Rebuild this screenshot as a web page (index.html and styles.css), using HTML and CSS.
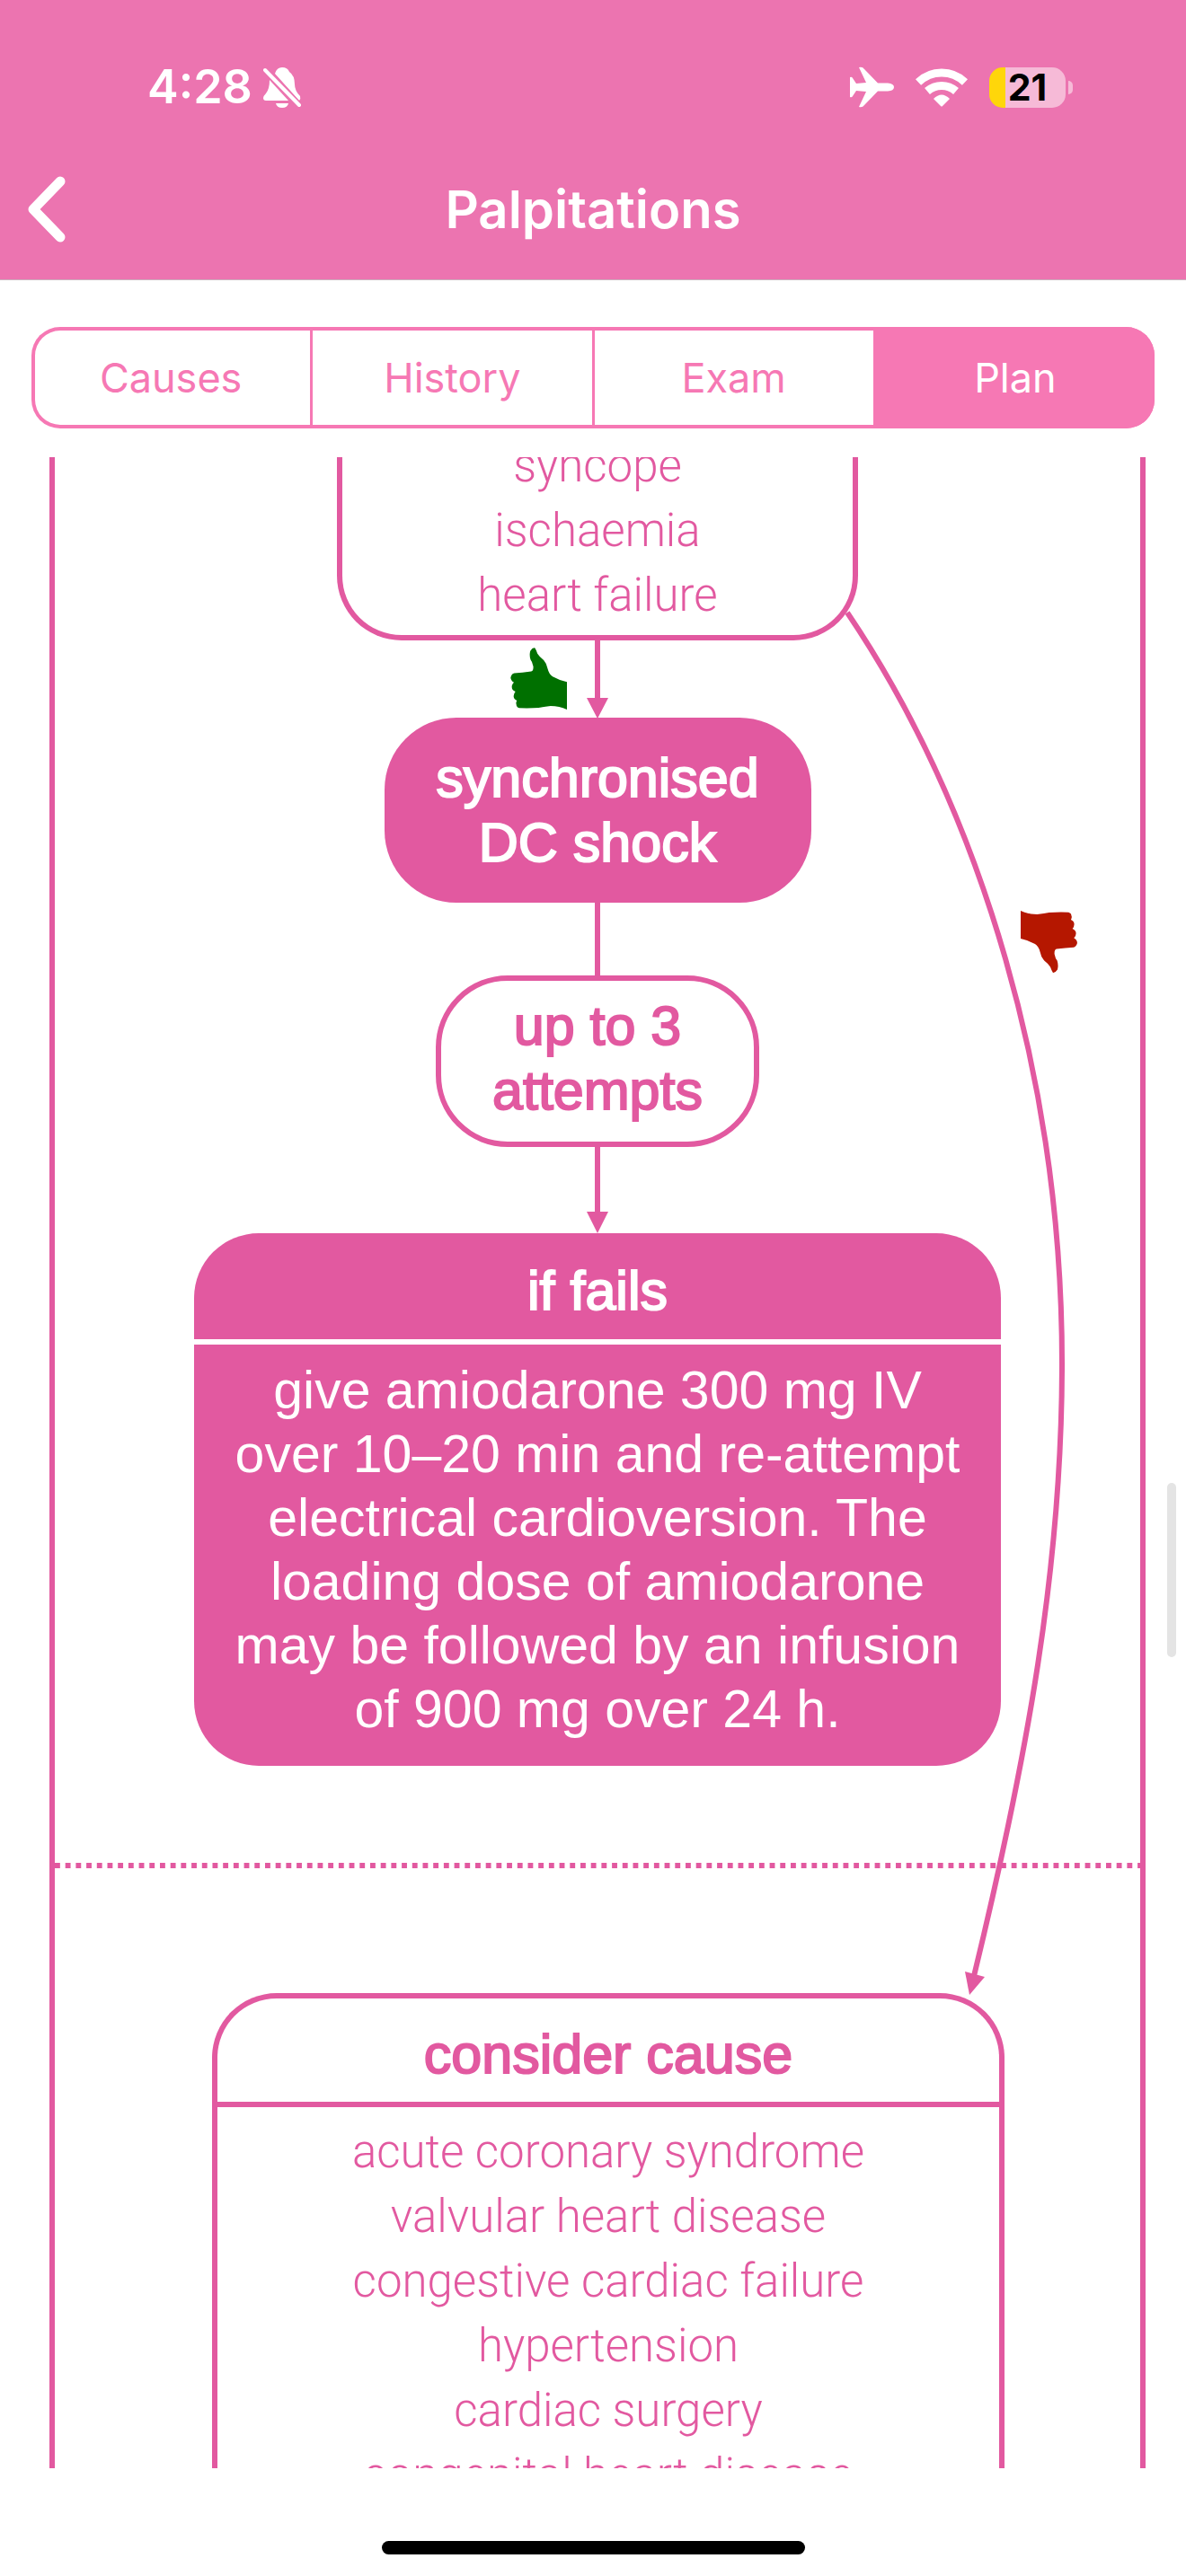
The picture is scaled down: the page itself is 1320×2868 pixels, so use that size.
FILE: index.html
```html
<!DOCTYPE html>
<html lang="en">
<head>
<meta charset="utf-8">
<meta name="viewport" content="width=device-width, initial-scale=1">
<title>Palpitations</title>
<link rel="stylesheet" href="styles.css">
</head>
<body>
<header class="app-header">
  <div class="status-bar">
    <div class="status-side">
      <span class="clock">4:28</span>
      <svg class="bell" viewBox="0 0 42 46" aria-label="Silent mode">
        <path fill="#fff" d="M13 8 Q15 1 21 1 Q27 1 29 6 Q35 10 35 20 Q35 27 41 33 Q42 36 40 38 Z"/>
        <path fill="#fff" d="M7 15 Q7 25 3 30 Q0 33 0 35 Q0 38 3 38 L28 38 Z"/>
        <path fill="#fff" d="M14 41 H28 Q27 46 21 46 Q15 46 14 41 Z"/>
        <path stroke="#ec74b0" stroke-width="8" d="M2 3 L42 46"/>
        <path stroke="#fff" stroke-width="4" stroke-linecap="round" d="M2 4 L40 43"/>
      </svg>
    </div>
    <div class="status-side status-icons">
      <svg class="plane" viewBox="0 0 49 46" aria-label="Airplane mode">
        <path fill="#fff" d="M10 1 Q14 0 16 3 L31 18.500 H42 Q49 19 49 23 Q49 27 42 27.500 H31 L16 43 Q14 46 10 45 L18 28 L7 27 L3 33 Q2 35 0 34 V12 Q2 11 3 13 L7 19 L18 18 Z"/>
      </svg>
      <svg class="wifi" viewBox="0 0 58 43" aria-label="Wi-Fi">
        <path fill="none" stroke="#fff" stroke-width="9" d="M3 15.500 Q14 5 29 5 Q44 5 55 15.500"/>
        <path fill="none" stroke="#fff" stroke-width="9" d="M13 25.500 Q20 19.500 29 19.500 Q38 19.500 45 25.500"/>
        <path fill="#fff" d="M20 34 Q29 25 38 34 L30 42 Q29 43 28 42 Z"/>
      </svg>
      <div class="battery"><span class="battery-level">21</span></div>
    </div>
  </div>
  <div class="title-bar">
    <button class="back" type="button" aria-label="Back">
      <svg viewBox="0 0 44 76"><path d="M37 7 L7 38 L37 69"/></svg>
    </button>
    <h1 class="title">Palpitations</h1>
  </div>
</header>

<nav class="tabs">
  <button class="tab" type="button">Causes</button>
  <button class="tab" type="button">History</button>
  <button class="tab" type="button">Exam</button>
  <button class="tab tab-active" type="button">Plan</button>
</nav>

<main class="viewport">
  <div class="lane">
    <section class="card outline signs">
      <ul class="list">
        <li>syncope</li>
        <li>ischaemia</li>
        <li>heart failure</li>
      </ul>
    </section>

    <div class="connector">
      <svg class="thumb" viewBox="0 0 190 208" aria-label="Yes">
        <defs>
          <path id="thumb" d="M0 0 Q25 12 55 12 Q80 9 95 6 Q120 4 160 5 Q170 8 170 18 Q172 22 168 30 Q179 35 179 45 Q179 53 173 60 Q185 65 185 76 Q185 85 178 91 Q189 98 189 108 Q185 121 177 122 Q150 123 120 128 Q112 130 113 145 Q116 160 122 167 Q127 182 123 197 Q116 208 108 207 Q103 200 99 188 Q92 177 78 166 Q68 155 65 138 Q60 118 48 111 Q25 98 0 93 Z"/>
        </defs>
        <use href="#thumb" fill="#007000" transform="rotate(180 95 104)"/>
      </svg>
      <svg class="arrow" viewBox="0 0 24 86"><path d="M9 0 H15 V64 H24 L12 87 L0 64 H9 Z"/></svg>
    </div>

    <section class="card solid shock">synchronised<br>DC shock</section>
    <div class="stem"></div>
    <section class="card outline attempts">up to 3<br>attempts</section>

    <div class="connector">
      <svg class="arrow arrow-long" viewBox="0 0 24 96"><path d="M9 0 H15 V72 H24 L12 96 L0 72 H9 Z"/></svg>
    </div>

    <section class="card solid fails">
      <h2 class="card-title">if fails</h2>
      <p class="card-text">give amiodarone 300 mg IV over 10–20 min and re-attempt electrical cardioversion. The loading dose of amiodarone may be followed by an infusion of 900 mg over 24 h.</p>
    </section>

    <svg class="divider" aria-hidden="true"><line x1="0" y1="3" x2="100%" y2="3"/></svg>

    <section class="card outline cause">
      <h2 class="card-title">consider cause</h2>
      <ul class="list">
        <li>acute coronary syndrome</li>
        <li>valvular heart disease</li>
        <li>congestive cardiac failure</li>
        <li>hypertension</li>
        <li>cardiac surgery</li>
        <li>congenital heart disease</li>
      </ul>
    </section>

    <svg class="branch" viewBox="61 509 1208 1720" aria-label="No">
      <path class="branch-line" d="M943 682 C1094 906 1182 1208 1182 1518 C1182 1745 1143 1957 1084 2200"/>
      <path class="branch-head" d="M1074 2195 L1096 2201 L1079 2221 Z"/>
      <use href="#thumb" fill="#b51700" transform="translate(1136 1014) scale(0.333)"/>
    </svg>
  </div>
  <div class="scroll-thumb"></div>
</main>

<footer class="home"><div class="home-bar"></div></footer>
</body>
</html>
```

FILE: styles.css
```css
:root {
  --header: #ec74b0;
  --tab: #f678b4;
  --pink: #e259a0;
  --ui: Inter, "Liberation Sans", sans-serif;
  --chart: "Liberation Sans", Arial, sans-serif;
}

* { box-sizing: border-box; margin: 0; padding: 0; }

body {
  display: flex;
  flex-direction: column;
  height: 100vh;
  background: #fff;
  font-family: var(--ui);
}

button { font: inherit; background: none; border: 0; cursor: pointer; }
svg { display: block; }

/* Header */
.app-header {
  flex: none;
  background: var(--header);
  border-bottom: 1px solid #c9b3be;
  color: #fff;
}

.status-bar {
  display: flex;
  justify-content: space-between;
  padding: 66px 124px 0 164px;
}

.status-side { display: flex; align-items: center; height: 62px; gap: 12px; }
.status-icons { gap: 24px; }
.clock { font-size: 52px; font-weight: 600; line-height: 62px; }
.bell { width: 42px; height: 46px; }
.plane { width: 49px; height: 46px; }
.wifi { width: 58px; height: 43px; }

.battery {
  position: relative;
  width: 85px;
  height: 45px;
  margin-right: 10px;
  border-radius: 15px;
  background: linear-gradient(90deg, #ffd60a 18px, #f6bad7 18px);
  color: #000;
  text-align: center;
}

.battery::after {
  content: "";
  position: absolute;
  right: -8px;
  top: 15px;
  width: 5px;
  height: 15px;
  border-radius: 0 5px 5px 0;
  background: #f6bad7;
}

.battery-level { font-size: 41px; font-weight: 700; line-height: 45px; }

.title-bar {
  display: grid;
  grid-template-columns: 44px 1fr 44px;
  align-items: center;
  height: 183px;
  padding: 30px 30px 4px;
}

.back svg { width: 44px; height: 76px; }
.back path {
  fill: none;
  stroke: #fff;
  stroke-width: 11;
  stroke-linecap: round;
  stroke-linejoin: round;
}

.title { font-size: 58px; font-weight: 600; line-height: 70px; text-align: center; }

/* Segmented tabs */
.tabs {
  flex: none;
  display: flex;
  height: 113px;
  margin: 52px 35px 32px;
  border-radius: 32px;
  box-shadow: inset 0 0 0 4px var(--tab);
  overflow: hidden;
}

.tab {
  flex: 1;
  color: var(--tab);
  font-size: 45px;
  border-left: 3px solid var(--tab);
}

.tab:first-child { border-left: 0; }
.tab-active { background: var(--tab); color: #fff; }

/* Flowchart */
.viewport {
  position: relative;
  flex: 1;
  min-height: 0;
  overflow: hidden;
}

.lane {
  position: relative;
  display: flex;
  flex-direction: column;
  align-items: center;
  margin: 0 45px 0 55px;
  border: solid var(--pink);
  border-width: 0 6px;
  font-family: var(--chart);
}

.card {
  line-height: 72px;
  text-align: center;
  border-radius: 72px;
}

.outline { border: 6px solid var(--pink); color: var(--pink); }
.solid { background: var(--pink); color: #fff; }

.card-title,
.shock,
.attempts { font-size: 61px; font-weight: 400; -webkit-text-stroke: 2px currentColor; }

.list {
  list-style: none;
  font-family: Roboto, "Liberation Sans", sans-serif;
  font-size: 51px;
  font-weight: 300;
}

/* scrolled so that the first row is partly out of view */
.signs {
  width: 580px;
  margin-top: -26px;
  padding-bottom: 8px;
  border-top: 0;
  border-radius: 0 0 72px 72px;
}

.connector {
  display: grid;
  grid-template-columns: 1fr 24px 1fr;
  column-gap: 22px;
  width: 100%;
}

.thumb { width: 63px; height: 69px; margin-top: 8px; justify-self: end; }
.arrow { grid-column: 2; width: 24px; height: 86px; fill: var(--pink); overflow: visible; }
.arrow-long { height: 96px; }

.shock { padding: 31px 50px; width: 475px; border-radius: 80px; }
.stem { width: 6px; height: 81px; background: var(--pink); }
.attempts { width: 360px; padding: 14px 20px 21px; border-radius: 80px; }

.fails { width: 898px; padding-bottom: 27px; }
.fails .card-title { padding: 28px 0 18px; border-bottom: 6px solid #fff; }
.card-text { padding: 16px 36px 0; font-size: 59px; line-height: 71px; }

.divider { width: 100%; height: 6px; margin: 108px 0 139px; }
.divider line { stroke: var(--pink); stroke-width: 6; stroke-dasharray: 5.85; }

.cause {
  width: 882px;
  margin-left: 24px;
  border-bottom: 0;
  border-radius: 72px 72px 0 0;
}
.cause .card-title { padding: 26px 0 17px; border-bottom: 6px solid var(--pink); }
.cause .list { padding-top: 14px; }

/* long branch drawn over the lane */
.branch {
  position: absolute;
  top: 0;
  left: 50%;
  width: 1208px;
  height: 1720px;
  margin-left: -604px;
  pointer-events: none;
}
.branch-line { fill: none; stroke: var(--pink); stroke-width: 6; }
.branch-head { fill: var(--pink); }

.scroll-thumb {
  position: absolute;
  right: 11px;
  top: 51%;
  width: 10px;
  height: 194px;
  border-radius: 5px;
  background: #e4e4e4;
}

/* Home indicator */
.home {
  flex: none;
  display: flex;
  justify-content: center;
  padding: 81px 0 24px;
}
.home-bar { width: 471px; height: 15px; border-radius: 8px; background: #000; }
```
